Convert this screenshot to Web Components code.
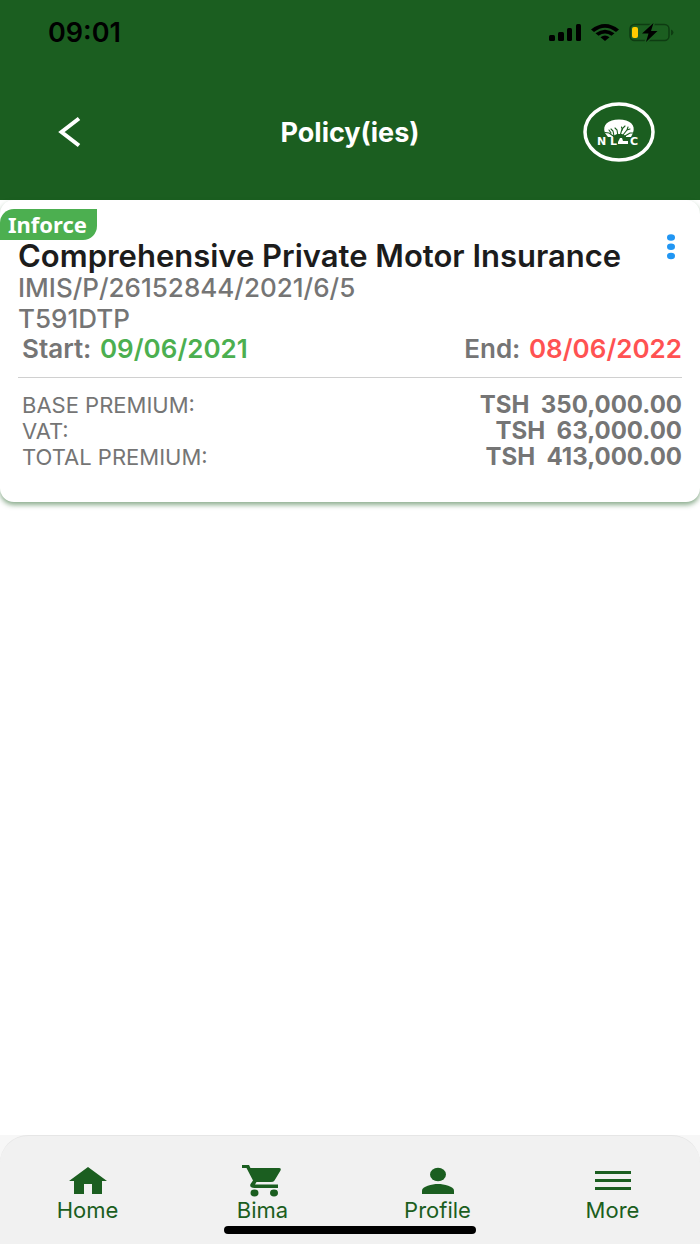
<!DOCTYPE html>
<html lang="en">
<head>
<meta charset="utf-8">
<meta name="viewport" content="width=device-width, initial-scale=1">
<title>Policy(ies)</title>
<style>
  body {
    margin: 0;
    font-family: Inter, "Liberation Sans", sans-serif;
    background: #fff;
  }
</style>
</head>
<body>
<policy-app></policy-app>

<script>
class BaseElement extends HTMLElement {
  constructor() {
    super();
    const template = document.createElement("template");
    template.innerHTML = this.constructor.styles + this.constructor.markup;
    this.attachShadow({ mode: "open" });
    this.shadowRoot.appendChild(template.content.cloneNode(true));
  }
}

/** Clock on the left, signal, wifi and battery on the right. */
class StatusBar extends BaseElement {
  static get styles() {
    return `
      <style>
        :host {
          display: flex;
          justify-content: space-between;
          align-items: center;
          height: 64px;
          padding: 0 26px 0 48px;
          color: #000;
          font-size: 27px;
          font-weight: 600;
        }
        svg { display: block; }
      </style>
    `;
  }

  static get markup() {
    return `
      <time><slot></slot></time>
      <svg width="126" height="24" viewBox="0 0 126 24" aria-hidden="true">
        <rect x="1" y="15" width="6" height="6" rx="1.5"/>
        <rect x="10" y="12" width="6" height="9" rx="1.5"/>
        <rect x="19" y="8" width="5" height="13" rx="1.5"/>
        <rect x="28" y="4" width="5" height="17" rx="1.5"/>
        <path d="M43 9.500Q57 -1.500 71 9.500L68 12Q57 3.500 46 12Z"/>
        <path d="M47.500 13.300Q57 6 66.500 13.300L63.500 15.800Q57 11 50.500 15.800Z"/>
        <path d="M52.500 17.200Q57 13.800 61.500 17.200L57 21Z"/>
        <rect x="82" y="4.500" width="39" height="16" rx="4.500" fill="none" stroke="#0e3c12" stroke-width="1.500"/>
        <path d="M123 9.500q2.500 1 2.500 3t-2.500 3z" fill="#0e3c12"/>
        <rect x="84" y="7" width="6" height="11" rx="2" fill="#fc0"/>
        <path d="M105.500 3L94 13.500h6.500L98 22l11.500-11h-6.500z" stroke="#1b5e20" stroke-width="3" paint-order="stroke"/>
      </svg>
    `;
  }
}

/** Round company logo: a tree above the initials. */
class CompanyLogo extends BaseElement {
  static get styles() {
    return `
      <style>
        :host { display: block; }
        svg { display: block; }
      </style>
    `;
  }

  static get markup() {
    return `
      <svg width="72" height="60" viewBox="0 0 72 60" role="img" aria-label="NLC">
        <ellipse cx="36" cy="30" rx="34" ry="28" fill="none" stroke="#fff" stroke-width="3.500"/>
        <path fill="#fff" d="M22 31C19 23 25 17.500 36 17.500S53 23 50 31L48 35H42L40 33H33L31 35H25Z"/>
        <g fill="none" stroke="#1b5e20" stroke-width="1.100" stroke-linecap="round">
          <path d="M22 30.500l4 .5 5 3.500M26 28l2 3M31 34l-1-5-2-2M35 34l-1-6-2-2M37 34l2-7 3-3M39.500 28l-1-3M40 33l4-5 3-1M44 28l1-3M42 34l5-3 3 0"/>
        </g>
        <path fill="#1b5e20" d="M30 34l4-2h5l4 2v3H30z"/>
        <path fill="#fff" d="M35 40l2-4h2l1 3h5v3H35z"/>
        <g fill="#fff" font-family="DejaVu Sans, sans-serif" font-weight="700" font-size="11">
          <text x="14" y="43">N</text>
          <text x="27" y="43">L</text>
          <text x="47" y="43">C</text>
        </g>
      </svg>
    `;
  }
}

class AppBar extends BaseElement {
  static get styles() {
    return `
      <style>
        :host {
          display: grid;
          grid-template-columns: 1fr auto 1fr;
          align-items: center;
          height: 136px;
          padding: 0 45px;
          color: #fff;
        }
        button {
          display: flex;
          justify-content: center;
          justify-self: start;
          width: 48px;
          padding: 8px 0;
          border: none;
          background: none;
          color: inherit;
          cursor: pointer;
        }
        h1 {
          margin: 0;
          font-size: 27px;
          font-weight: 700;
        }
        company-logo { justify-self: end; }
      </style>
    `;
  }

  static get markup() {
    return `
      <button type="button" aria-label="Back">
        <svg width="24" height="32" viewBox="0 0 24 32" fill="none" stroke="currentColor" stroke-width="4">
          <path d="M22 2.500L4.500 16 22 29.500"/>
        </svg>
      </button>
      <h1><slot></slot></h1>
      <company-logo></company-logo>
    `;
  }
}

class PolicyCard extends BaseElement {
  static get styles() {
    return `
      <style>
        :host {
          display: block;
          padding: 9px 18px 32px;
          border-radius: 14px;
          background: #fff;
          box-shadow: 0 3px 5px rgba(27, 94, 32, .5);
          color: #757575;
          font-size: 26px;
          line-height: 31px;
        }
        .badge {
          width: fit-content;
          margin-left: -18px;
          padding: 0 10px 0 8px;
          border-radius: 14px 0;
          background: #4caf50;
          color: #fff;
          font-family: "Noto Sans", sans-serif;
          font-size: 22px;
          font-weight: 700;
        }
        .top {
          display: flex;
          justify-content: space-between;
        }
        h2 {
          margin: 0;
          color: #1c1c1c;
          font-size: 31px;
          font-weight: 600;
          line-height: 32px;
        }
        button {
          align-self: start;
          height: 28px;
          margin: -6px 0 0;
          padding: 0 6px;
          border: none;
          background: none;
          cursor: pointer;
        }
        button svg { display: block; }
        p {
          margin: 0;
          font-weight: 500;
        }
        .dates {
          display: flex;
          justify-content: space-between;
          padding-left: 4px;
          font-weight: 600;
          line-height: 30px;
        }
        .start {
          padding-left: 2px;
          color: #4caf50;
        }
        .end {
          padding-left: 2px;
          color: #ff5252;
        }
        hr {
          margin: 13px 0 14px;
          border: none;
          border-top: 1px solid #d0d0d0;
        }
        table {
          width: 100%;
          border-collapse: collapse;
          font-size: 24px;
          line-height: 26px;
        }
        th {
          padding: 0 0 0 4px;
          font-size: 22px;
          font-weight: 400;
          text-align: left;
        }
        td {
          padding: 0;
          font-weight: 700;
          text-align: right;
          white-space: pre;
        }
      </style>
    `;
  }

  static get markup() {
    return `
      <div class="badge"><slot name="status"></slot></div>
      <div class="top">
        <h2><slot name="title"></slot></h2>
        <button type="button" aria-label="Policy options">
          <svg width="10" height="28" viewBox="0 0 10 28" fill="#2196f3">
            <ellipse cx="5" cy="3.500" rx="4" ry="3.300"/>
            <ellipse cx="5" cy="12.700" rx="4" ry="3.300"/>
            <ellipse cx="5" cy="22" rx="4" ry="3.300"/>
          </svg>
        </button>
      </div>
      <p><slot name="number"></slot></p>
      <p><slot name="vehicle"></slot></p>
      <div class="dates">
        <div>Start: <span class="start"><slot name="start"></slot></span></div>
        <div>End: <span class="end"><slot name="end"></slot></span></div>
      </div>
      <hr>
      <table>
        <tr><th scope="row">BASE PREMIUM:</th><td><slot name="base"></slot></td></tr>
        <tr><th scope="row">VAT:</th><td><slot name="vat"></slot></td></tr>
        <tr><th scope="row">TOTAL PREMIUM:</th><td><slot name="total"></slot></td></tr>
      </table>
    `;
  }
}

/** One link in the bottom bar. The icon is passed in the "icon" slot. */
class TabItem extends BaseElement {
  static get styles() {
    return `
      <style>
        :host { display: block; }
        a {
          display: flex;
          flex-direction: column;
          align-items: center;
          color: #1b5e20;
          font-size: 22px;
          line-height: 24px;
          text-decoration: none;
        }
        ::slotted(svg) { display: block; }
      </style>
    `;
  }

  static get markup() {
    return `
      <a href="#"><slot name="icon"></slot><span><slot></slot></span></a>
    `;
  }
}

class TabBar extends BaseElement {
  static get styles() {
    return `
      <style>
        :host {
          display: block;
          background: #f7f7f7;
        }
        nav {
          display: flex;
          flex-direction: column;
          align-items: center;
          gap: 4px;
          padding: 26px 0 10px;
          border-top: 1px solid #e6e6e6;
          border-radius: 28px 28px 0 0;
          background: #f1f1f1;
        }
        .tabs {
          display: flex;
          width: 100%;
        }
        tab-item { width: 25%; }
        .indicator {
          width: 36%;
          height: 8px;
          border-radius: 4px;
          background: #000;
        }
      </style>
    `;
  }

  static get markup() {
    return `
      <nav>
        <div class="tabs">
          <tab-item>
            <svg slot="icon" width="44" height="36" viewBox="0 0 44 36" fill="currentColor">
              <path d="M22 5L3 19h5v13h10V22h8v10h10V19h5z"/>
            </svg>
            Home
          </tab-item>
          <tab-item>
            <svg slot="icon" width="44" height="36" viewBox="0 0 44 36" fill="currentColor">
              <path d="M1 3h7l1.500 3H38q2.500 0 1.500 2.500l-6 10Q32.500 20 30 20H15.500L14 22.500h23V26H13.500Q8 26 9.500 22L12 18.500 5.500 6H1z"/>
              <ellipse cx="13.500" cy="31" rx="4" ry="3.400"/>
              <ellipse cx="33" cy="31" rx="4" ry="3.400"/>
            </svg>
            Bima
          </tab-item>
          <tab-item>
            <svg slot="icon" width="44" height="36" viewBox="0 0 44 36" fill="currentColor">
              <ellipse cx="22" cy="12.500" rx="8" ry="6.700"/>
              <path d="M6 32v-3.500C6 24.500 16 22 22 22s16 2.500 16 6.500V32z"/>
            </svg>
            Profile
          </tab-item>
          <tab-item>
            <svg slot="icon" width="44" height="36" viewBox="0 0 44 36" fill="currentColor">
              <path d="M4 9h36v3H4zM4 17h36v3H4zM4 25h36v3H4z"/>
            </svg>
            More
          </tab-item>
        </div>
        <div class="indicator"></div>
      </nav>
    `;
  }
}

class PolicyApp extends BaseElement {
  static get styles() {
    return `
      <style>
        :host {
          display: flex;
          flex-direction: column;
          min-height: 100vh;
        }
        header { background: #1b5e20; }
        main { flex: 1; }
      </style>
    `;
  }

  static get markup() {
    return `
      <header>
        <status-bar>09:01</status-bar>
        <app-bar>Policy(ies)</app-bar>
      </header>
      <main>
        <policy-card>
          <span slot="status">Inforce</span>
          <span slot="title">Comprehensive Private Motor Insurance</span>
          <span slot="number">IMIS/P/26152844/2021/6/5</span>
          <span slot="vehicle">T591DTP</span>
          <span slot="start">09/06/2021</span>
          <span slot="end">08/06/2022</span>
          <span slot="base">TSH  350,000.00</span>
          <span slot="vat">TSH  63,000.00</span>
          <span slot="total">TSH  413,000.00</span>
        </policy-card>
      </main>
      <tab-bar></tab-bar>
    `;
  }
}

customElements.define("status-bar", StatusBar);
customElements.define("company-logo", CompanyLogo);
customElements.define("app-bar", AppBar);
customElements.define("policy-card", PolicyCard);
customElements.define("tab-item", TabItem);
customElements.define("tab-bar", TabBar);
customElements.define("policy-app", PolicyApp);
</script>
</body>
</html>
